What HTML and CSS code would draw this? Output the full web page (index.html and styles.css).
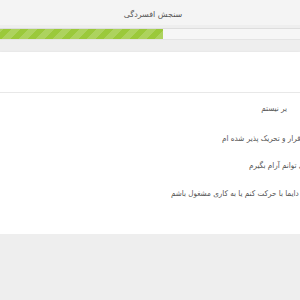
FILE: index.html
```html
<!DOCTYPE html>
<html lang="fa" dir="rtl">
<head>
    <meta charset="UTF-8">
    <meta name="viewport" content="width=device-width, initial-scale=1.0">
    <title>سنجش افسردگی</title>
    <link rel="stylesheet" href="styles.css">
</head>
<body>
    <div class="header">سنجش افسردگی</div>

    <div class="progress">
        <div class="progress-fill"></div>
    </div>

    <div class="card">
        <div class="card-top"></div>
        <ul class="answers">
            <li class="first">یر نیستم</li>
            <li>بی قرار و تحریک پذیر شده ام</li>
            <li>نمی توانم آرام بگیرم</li>
            <li>باید دایما با حرکت کنم یا به کاری مشغول باشم</li>
        </ul>
    </div>
</body>
</html>
```

FILE: styles.css
```css
body {
    font-family: "DejaVu Sans", Tahoma, sans-serif;
    background-color: #eeeeee;
    margin: 0;
    overflow: hidden;
}
.header {
    height: 25px;
    line-height: 29px;
    text-align: center;
    font-size: 8px;
    color: #555;
    background-color: #f4f4f4;
    padding-left: 6px;
}
.progress {
    height: 10px;
    margin-top: 3px;
    background-color: #f6f6f6;
    border-top: 1px solid #dddddd;
    border-bottom: 1px solid #e4e4e4;
    direction: ltr;
}
.progress-fill {
    width: 163px;
    height: 100%;
    background-color: #9bc93b;
    background-image: repeating-linear-gradient(
        -45deg,
        rgba(255, 255, 255, 0.18) 0,
        rgba(255, 255, 255, 0.18) 6px,
        transparent 6px,
        transparent 12px
    );
}
.card {
    margin-top: 12px;
    height: 182px;
    background: white;
    box-shadow: 0 1px 3px rgba(0, 0, 0, 0.12);
    overflow: hidden;
}
.card-top {
    height: 40px;
    border-bottom: 1px solid #e8e8e8;
}
.answers {
    list-style: none;
    margin: 0 -11px 0 0;
    padding: 11px 0 0 0;
    font-family: "DejaVu Sans Condensed", "DejaVu Sans", sans-serif;
    font-size: 8px;
    color: #555;
    white-space: nowrap;
}
.answers li {
    height: 28px;
    line-height: 10px;
}
.answers li:nth-child(2) {
    height: 27px;
}
.answers li.first {
    height: 30px;
    padding-right: 24px;
}
```
